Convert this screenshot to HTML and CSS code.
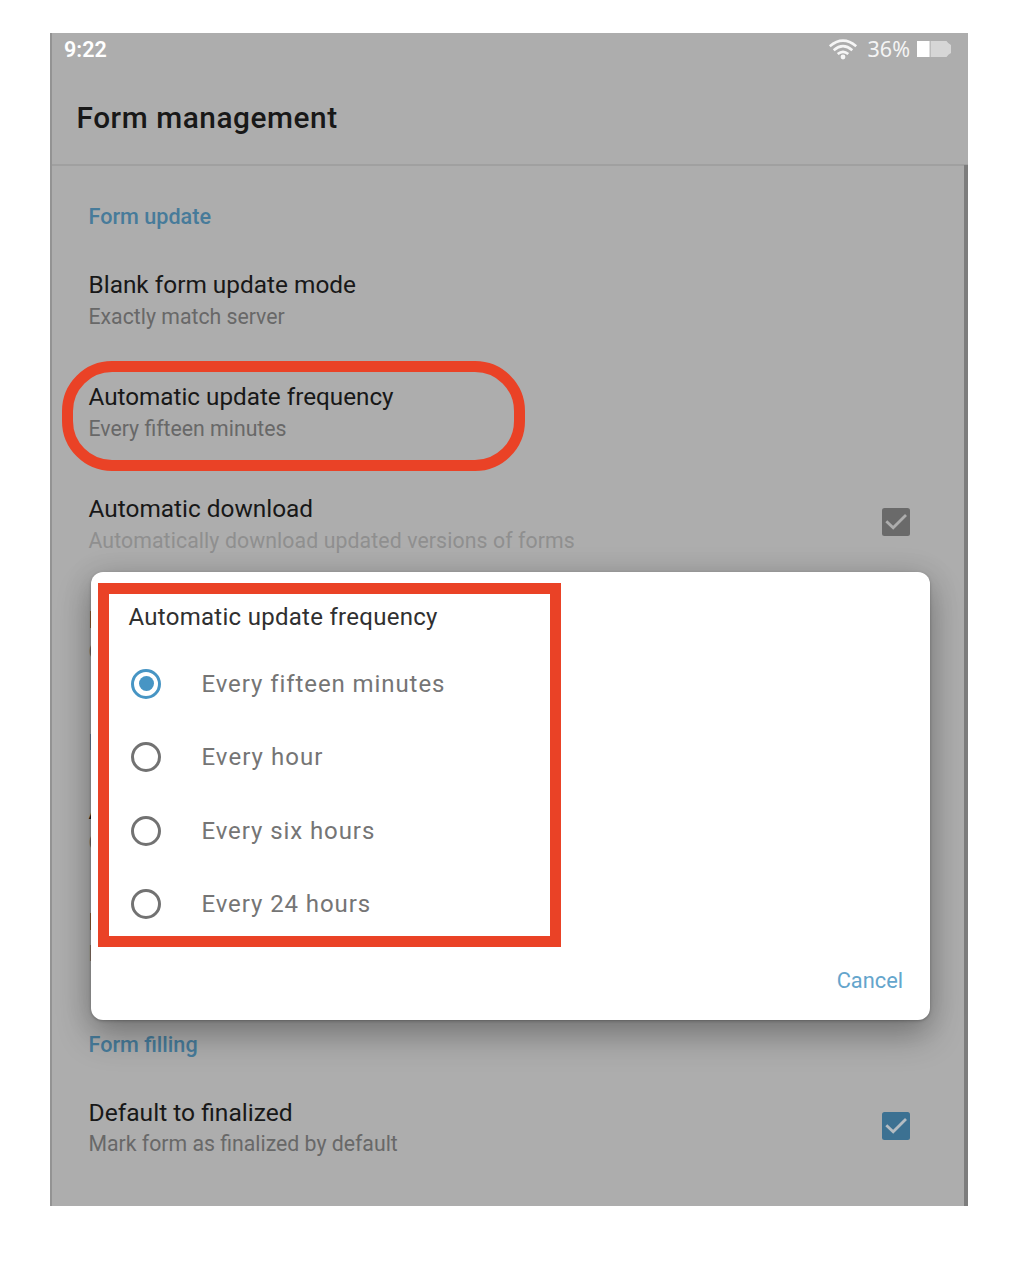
FILE: index.html
```html
<!DOCTYPE html>
<html lang="en">
<head>
<meta charset="utf-8">
<title>Form management</title>
<link rel="stylesheet" href="styles.css">
</head>
<body>
<div class="screen">
  <header class="status">
    <span class="clock">9:22</span>
    <svg class="wifi" viewBox="0 0 30 22" width="30" height="22" fill="none" stroke="#f6f6f6" stroke-width="2.6">
      <path d="M1.8 8.2Q15-2.8 28.2 8.2M5.7 12.2Q15 4.2 24.3 12.2M9.7 16.1Q15 11.6 20.3 16.1"/>
      <circle cx="15" cy="19" r="2.4" fill="#f6f6f6" stroke="none"/>
    </svg>
    <span class="percent">36%</span>
    <svg class="battery" viewBox="0 0 34 16" width="34" height="16">
      <path d="M0 0H12.6V16H0Z" fill="#fff"/>
      <path d="M13.6 0H29.5Q31 2.5 34 4V12Q31 13.5 29.5 16H13.6Z" fill="#d6d6d6"/>
    </svg>
  </header>
  <div class="toolbar"><h1 class="page-title">Form management</h1></div>
  <main class="list">
    <h2 class="section first">Form update</h2>
    <div class="item"><div><div class="name">Blank form update mode</div><div class="summary">Exactly match server</div></div></div>
    <div class="item"><div><div class="name frequency">Automatic update frequency</div><div class="summary">Every fifteen minutes</div></div>
      <div class="mark-oval"></div></div>
    <div class="item"><div><div class="name">Automatic download</div><div class="summary disabled">Automatically download updated versions of forms</div></div>
      <svg class="check" viewBox="0 0 28 28" width="28" height="28"><rect width="28" height="28" rx="2.5" fill="#6a6a6a"/><path d="M4.3 13.2L11.2 19.8L24 7" fill="none" stroke="#adadad" stroke-width="2.8"/></svg></div>
    <div class="item"><div><div class="name">H</div><div class="summary">O</div></div></div>
    <h2 class="section">F</h2>
    <div class="item"><div><div class="name">A</div><div class="summary">O</div></div></div>
    <div class="item"><div><div class="name">D</div><div class="summary">D</div></div></div>
    <h2 class="section">Form filling</h2>
    <div class="item"><div><div class="name finalized">Default to finalized</div><div class="summary">Mark form as finalized by default</div></div>
      <svg class="check" viewBox="0 0 28 28" width="28" height="28"><rect width="28" height="28" rx="2.5" fill="#3c7192"/><path d="M4.3 13.2L11.2 19.8L24 7" fill="none" stroke="#b4bcc2" stroke-width="2.8"/></svg></div>
  </main>
  <div class="scrollbar"></div>
  <section class="dialog">
    <h2 class="dialog-title">Automatic update frequency</h2>
    <div class="option"><i class="radio on"></i><span>Every fifteen minutes</span></div>
    <div class="option hour"><i class="radio"></i><span>Every hour</span></div>
    <div class="option"><i class="radio"></i><span>Every six hours</span></div>
    <div class="option"><i class="radio"></i><span>Every 24 hours</span></div>
    <div class="actions"><span class="cancel">Cancel</span></div>
    <div class="mark-box"></div>
  </section>
</div>
</body>
</html>
```
FILE: styles.css
```css
* { box-sizing: border-box; }
body { margin: 0; padding: 33px 0 0 49.5px; background: #fff; font-family: Roboto, sans-serif; }
h1, h2 { margin: 0; }
.screen { position: relative; width: 918px; height: 1173px; overflow: hidden; background: #adadad; border-left: 2px solid #939393; white-space: nowrap; }
.status { display: flex; align-items: center; height: 32px; padding: 0 16.5px 0 12.5px; color: #fff; }
.clock { font-size: 21.5px; font-weight: 600; margin-right: auto; }
.wifi { margin-right: 9.5px; }
.percent { position: relative; top: -1px; font-family: "Noto Sans", sans-serif; font-size: 21.5px; color: #f4f4f4; margin-right: 7px; }
.battery { margin-top: -1px; }
.toolbar { display: flex; align-items: center; height: 101px; padding: 6px 0 0 25px; border-bottom: 2px solid #a0a0a0; }
.page-title { font-size: 29.8px; font-weight: 500; color: #181818; letter-spacing: .55px; }
.list { padding-left: 37px; }
.section { height: 78.5px; padding-top: 37px; font-size: 21.6px; line-height: 28px; font-weight: 500; color: #477b9a; }
.section.first { height: 79px; }
.item { position: relative; display: flex; justify-content: space-between; height: 111.75px; padding: 24px 57.5px 0 0; }
.name { font-size: 24.4px; line-height: 32px; color: #181818; }
.frequency { font-size: 24.25px; }
.finalized { font-size: 24.6px; line-height: 31.5px; }
.summary { font-size: 21.25px; line-height: 32px; color: #686868; }
.disabled { color: #8f8f8f; letter-spacing: .1px; }
.check { margin-top: 15px; }
.mark-oval { position: absolute; left: -26.5px; top: 4px; width: 463px; height: 110px; border: 11.5px solid #ea4226; border-radius: 50px; }
.scrollbar { position: absolute; right: 0; top: 132px; bottom: 0; width: 4px; background: #7d7d7d; }
.dialog { position: absolute; left: 39.7px; top: 539px; width: 838.5px; height: 448px; padding: 29px 26.7px 0 37.3px; background: #fff; border-radius: 12px; box-shadow: 0 16px 34px rgba(0,0,0,.28), 0 2px 30px rgba(0,0,0,.12), 0 1px 3px rgba(0,0,0,.25); }
.dialog-title { height: 46px; font-size: 24px; line-height: 33px; font-weight: 400; color: #303030; letter-spacing: .28px; }
.option { display: flex; align-items: center; height: 73.5px; padding-left: 2.8px; font-size: 24px; color: #757575; letter-spacing: .92px; }
.hour { letter-spacing: 1.05px; }
.radio { position: relative; width: 30px; height: 30px; margin-right: 40.2px; border: 3px solid #727272; border-radius: 50%; }
.radio.on { border-color: #4795c4; }
.radio.on::after { content: ""; position: absolute; left: 4.5px; top: 4.5px; width: 15px; height: 15px; border-radius: 50%; background: #4795c4; }
.actions { display: flex; justify-content: flex-end; padding-top: 26px; }
.cancel { font-size: 21.8px; line-height: 28px; color: #64a5cc; }
.mark-box { position: absolute; left: 7px; top: 11px; width: 463px; height: 364px; border: 11.5px solid #ea4226; }
```
